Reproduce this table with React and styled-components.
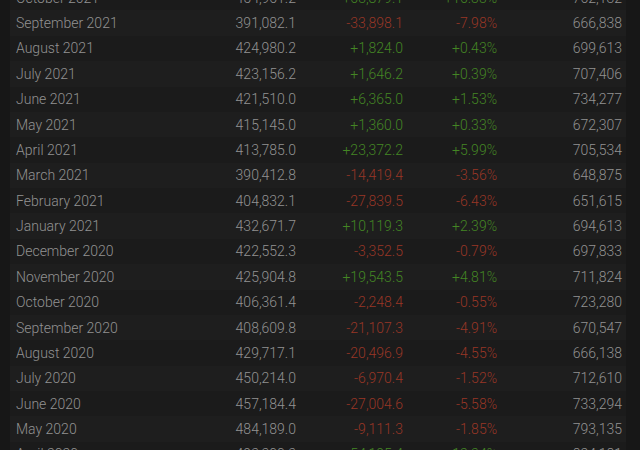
import React from 'react';
import styled, { createGlobalStyle } from 'styled-components';

const GlobalStyle = createGlobalStyle`
  html, body {
    margin: 0;
    padding: 0;
    background: #171717;
    overflow: hidden;
  }
`;

const Page = styled.div`
  width: 640px;
  height: 450px;
  overflow: hidden;
  padding: 0 14px 0 10px;
  box-sizing: border-box;
`;

const Table = styled.div`
  display: flex;
  flex-direction: column;
  margin-top: -15px;
  background: #1c1c1c;
  font-family: Roboto, 'Liberation Sans', sans-serif;
  font-weight: 300;
  font-size: 14px;
`;

const Row = styled.div`
  display: grid;
  grid-template-columns: 100px 180px 107px 94px 125px;
  height: 25.375px;
  align-items: center;
  padding: 0 4px 0 6px;
  background: ${({ odd }) => (odd ? '#1e1e1e' : '#1b1b1b')};
`;

const Cell = styled.div`
  text-align: ${({ left }) => (left ? 'left' : 'right')};
  white-space: nowrap;
  color: ${({ tone }) =>
    tone === 'up' ? '#448624' : tone === 'down' ? '#983626' : '#929292'};
`;

const rows = [
  ['October 2021', '454,961.2', '+63,879.1', '+16.33%', '762,132'],
  ['September 2021', '391,082.1', '-33,898.1', '-7.98%', '666,838'],
  ['August 2021', '424,980.2', '+1,824.0', '+0.43%', '699,613'],
  ['July 2021', '423,156.2', '+1,646.2', '+0.39%', '707,406'],
  ['June 2021', '421,510.0', '+6,365.0', '+1.53%', '734,277'],
  ['May 2021', '415,145.0', '+1,360.0', '+0.33%', '672,307'],
  ['April 2021', '413,785.0', '+23,372.2', '+5.99%', '705,534'],
  ['March 2021', '390,412.8', '-14,419.4', '-3.56%', '648,875'],
  ['February 2021', '404,832.1', '-27,839.5', '-6.43%', '651,615'],
  ['January 2021', '432,671.7', '+10,119.3', '+2.39%', '694,613'],
  ['December 2020', '422,552.3', '-3,352.5', '-0.79%', '697,833'],
  ['November 2020', '425,904.8', '+19,543.5', '+4.81%', '711,824'],
  ['October 2020', '406,361.4', '-2,248.4', '-0.55%', '723,280'],
  ['September 2020', '408,609.8', '-21,107.3', '-4.91%', '670,547'],
  ['August 2020', '429,717.1', '-20,496.9', '-4.55%', '666,138'],
  ['July 2020', '450,214.0', '-6,970.4', '-1.52%', '712,610'],
  ['June 2020', '457,184.4', '-27,004.6', '-5.58%', '733,294'],
  ['May 2020', '484,189.0', '-9,111.3', '-1.85%', '793,135'],
  ['April 2020', '493,300.3', '+54,195.4', '+12.34%', '824,181'],
];

const toneOf = (v) => (v.startsWith('+') ? 'up' : 'down');

export default function App() {
  return (
    <Page>
      <GlobalStyle />
      <Table>
        {rows.map((r, i) => (
          <Row key={r[0]} odd={i % 2 === 1}>
            <Cell left>{r[0]}</Cell>
            <Cell>{r[1]}</Cell>
            <Cell tone={toneOf(r[2])}>{r[2]}</Cell>
            <Cell tone={toneOf(r[3])}>{r[3]}</Cell>
            <Cell>{r[4]}</Cell>
          </Row>
        ))}
      </Table>
    </Page>
  );
}
